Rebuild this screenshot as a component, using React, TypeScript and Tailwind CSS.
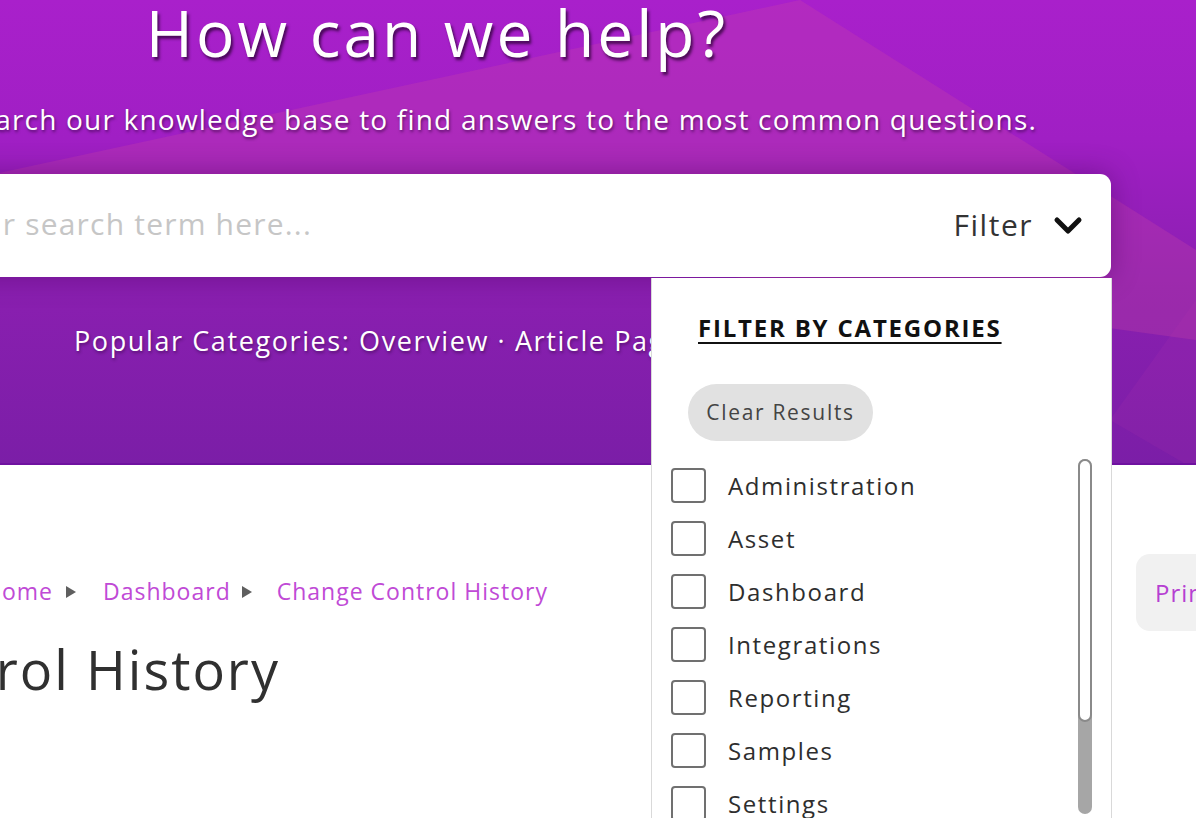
import React from "react";

const categories = [
  "Administration",
  "Asset",
  "Dashboard",
  "Integrations",
  "Reporting",
  "Samples",
  "Settings",
  "Users",
];

function Chevron() {
  return (
    <svg width="30" height="20" viewBox="0 0 30 20" className="block">
      <polyline
        points="4,4 15,15 26,4"
        fill="none"
        stroke="#111"
        strokeWidth="5"
        strokeLinecap="round"
        strokeLinejoin="round"
      />
    </svg>
  );
}

function Triangle() {
  return (
    <svg width="12" height="14" viewBox="0 0 12 14" className="block">
      <polygon points="1,1 11,7 1,13" fill="#5f5f5f" />
    </svg>
  );
}

export default function App() {
  return (
    <div
      className="relative w-[1196px] h-[818px] overflow-hidden bg-white"
      style={{ fontFamily: '"Open Sans", "Noto Sans", sans-serif' }}
    >
      {/* Hero */}
      <div className="relative h-[465px] overflow-hidden bg-[linear-gradient(180deg,#a920cb_0%,#a01fc4_30%,#8a1fb0_62%,#7b1ea7_100%)] border-b-[2px] border-[#6f12a0]">
        <svg
          className="absolute inset-0"
          width="1196"
          height="465"
          viewBox="0 0 1196 465"
        >
          <polygon points="800,0 -10,175 1196,340 1196,250" fill="#d24aa2" opacity="0.26" />
          <polygon points="1196,300 1110,420 1196,470" fill="#c03ab0" opacity="0.12" />
        </svg>

        <div className="relative ml-[-237px] w-[1348px] flex flex-col items-center">
          <h1 className="pt-[1px] leading-none text-[64px] text-white tracking-[3px] whitespace-nowrap [text-shadow:2px_3px_3px_rgba(40,0,50,0.75)]">
            How can we help?
          </h1>
          <p className="self-stretch mt-[40px] pr-[74px] text-right leading-none text-[28px] text-white whitespace-nowrap tracking-[1.2px] [text-shadow:1px_2px_3px_rgba(40,0,50,0.6)]">
            Search our knowledge base to find answers to the most common questions.
          </p>
          <div className="mt-[41px] h-[103px] w-full rounded-[11px] bg-white flex items-center shadow-[0_0_28px_rgba(70,0,90,0.45)]">
            <div className="w-[549px] text-right text-[30px] leading-none text-[#c6c6c6] whitespace-nowrap tracking-[1.2px] -mt-[3px]">
              Enter your search term here...
            </div>
            <div className="flex-1" />
            <div className="flex items-center gap-[20px] pr-[28px]">
              <span className="text-[30px] leading-none text-[#333] tracking-[1.5px] -mt-[2px]">Filter</span>
              <Chevron />
            </div>
          </div>
        </div>

        <div className="relative mt-[50px] pl-[74px] text-[27px] leading-none text-white whitespace-nowrap tracking-[1.6px] [text-shadow:1px_2px_3px_rgba(40,0,50,0.45)]">
          Popular Categories: Overview · Article Pages · Getting Started
        </div>
      </div>

      {/* Content below hero */}
      <div className="pt-[89px]">
        <div className="flex items-center h-[77px]">
          <nav className="ml-[-16px] -mt-[2px] flex items-center text-[23px] leading-none text-[#c04ad6] whitespace-nowrap tracking-[1px]">
            <span>Home</span>
            <span className="ml-[12px]">
              <Triangle />
            </span>
            <span className="ml-[26px]">Dashboard</span>
            <span className="ml-[10px]">
              <Triangle />
            </span>
            <span className="ml-[24px]">Change Control History</span>
          </nav>
          <div className="ml-auto mr-[-80px] h-[77px] w-[140px] rounded-[14px] bg-[#f1f1f1] flex items-center pl-[19px] text-[24px] leading-none text-[#b63fd2] tracking-[1px]">
            Print
          </div>
        </div>
        <h2 className="mt-[11px] ml-[-600px] w-[880px] text-right text-[54px] leading-none text-[#303030] whitespace-nowrap tracking-[2px]">
          Change Control History
        </h2>
      </div>

      {/* Filter dropdown panel */}
      <div className="absolute left-[651px] top-[278px] w-[461px] h-[560px] bg-white border-x border-[#d9d9d9] z-10">
        <div className="pt-[38px] pl-[46px]">
          <span className="text-[24px] leading-none font-bold text-[#111] underline underline-offset-[5px] decoration-[2px] tracking-[1.8px] whitespace-nowrap">
            FILTER BY CATEGORIES
          </span>
        </div>
        <div className="mt-[41px] ml-[36px] h-[57px] w-[185px] rounded-full bg-[#e1e1e1] flex items-center justify-center text-[21px] leading-none text-[#444] tracking-[1.7px]">
          Clear Results
        </div>
        <div className="relative mt-[18px]">
          <div className="flex flex-col">
            {categories.map((c) => (
              <div key={c} className="h-[53px] flex items-center pl-[19px] gap-[22px]">
                <div className="w-[35px] h-[35px] rounded-[4px] border-2 border-[#707070] bg-white" />
                <span className="text-[24px] leading-none text-[#2e2e2e] tracking-[1.6px]">{c}</span>
              </div>
            ))}
          </div>
          <div className="absolute left-[426px] top-0 w-[14px] h-[355px] rounded-full bg-[#a6a6a6]">
            <div className="h-[263px] w-full rounded-full border-[2px] border-[#8a8a8a] bg-white" />
          </div>
        </div>
      </div>
    </div>
  );
}
